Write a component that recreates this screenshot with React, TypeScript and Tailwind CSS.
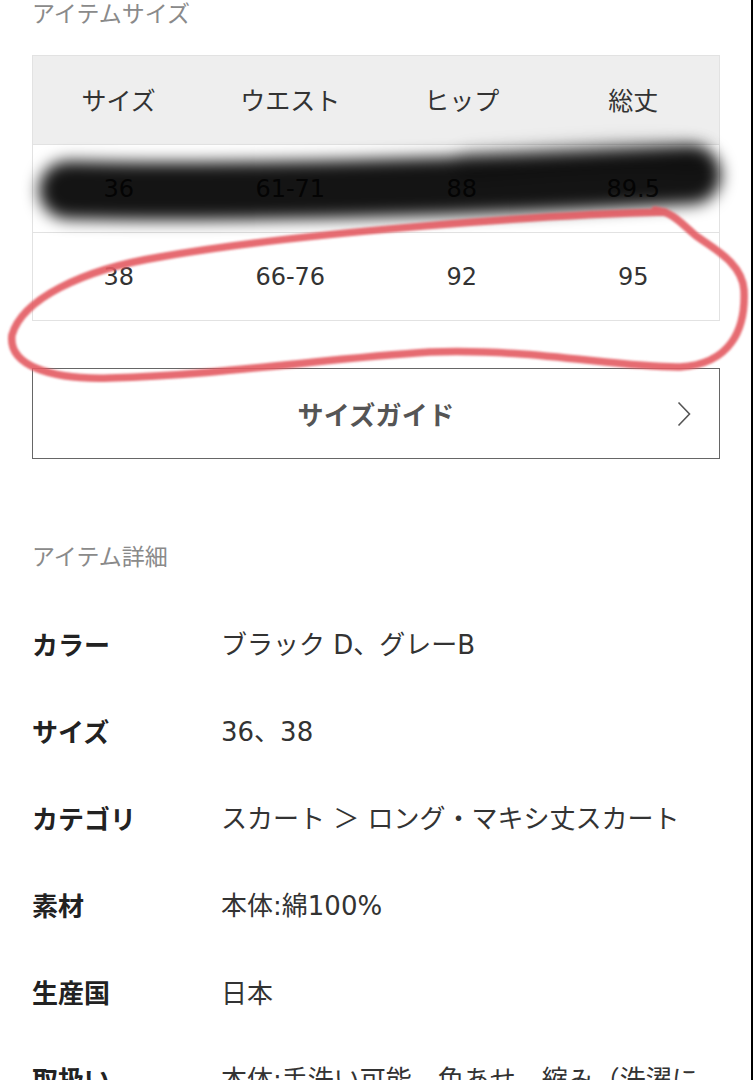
import React from "react";

const cjk = { fontFamily: '"Noto Sans CJK JP", "Noto Sans", sans-serif' };
const latin = { fontFamily: '"DejaVu Sans", "Noto Sans CJK JP", sans-serif' };

const header = ["サイズ", "ウエスト", "ヒップ", "総丈"];
const rows = [
  ["36", "61-71", "88", "89.5"],
  ["38", "66-76", "92", "95"],
];

const details: [string, string][] = [
  ["カラー", "ブラック D、グレーB"],
  ["サイズ", "36、38"],
  ["カテゴリ", "スカート ＞ ロング・マキシ丈スカート"],
  ["素材", "本体:綿100%"],
  ["生産国", "日本"],
  ["取扱い", "本体:手洗い可能、色あせ、縮み（洗濯に"],
];

function Mixed({ text }: { text: string }) {
  const parts = text.split(/([\x20-\x7E]+)/);
  return (
    <>
      {parts.map((p, i) =>
        /^[\x20-\x7E]+$/.test(p) ? (
          <span key={i} style={latin} className="whitespace-pre">
            {p}
          </span>
        ) : (
          <React.Fragment key={i}>{p}</React.Fragment>
        )
      )}
    </>
  );
}

export default function App() {
  return (
    <div
      className="relative w-[753px] h-[1080px] overflow-hidden bg-white border-r-2 border-black"
      style={cjk}
    >
      <div className="pl-[32px] pr-[31px]">
        <div className="h-[26px] leading-[26px] text-[23px] text-[#8a8a8a] -mt-[1px]">
          アイテムサイズ
        </div>

        <div className="mt-[30px] border border-[#e2e2e2]">
          <div className="grid grid-cols-4 h-[88px] bg-[#eeeeee] items-center text-center text-[25px] text-[#333]">
            {header.map((h) => (
              <div key={h}>{h}</div>
            ))}
          </div>
          {rows.map((r, i) => (
            <div
              key={i}
              className="grid grid-cols-4 h-[88px] items-center text-center text-[24px] text-[#333] border-t border-[#e2e2e2]"
              style={latin}
            >
              {r.map((c, j) => (
                <div key={j}>{c}</div>
              ))}
            </div>
          ))}
        </div>

        <div className="mt-[47px] h-[91px] border-[1.5px] border-[#666] flex items-center justify-center relative">
          <span className="text-[26px] font-bold text-[#555] tracking-[0.01em]">サイズガイド</span>
          <svg
            className="absolute right-[28px] top-1/2 -translate-y-1/2"
            width="14"
            height="26"
            viewBox="0 0 14 26"
          >
            <polyline points="1.5,1.5 12.5,13 1.5,24.5" fill="none" stroke="#555" strokeWidth="1.6" />
          </svg>
        </div>

        <div className="mt-[83px] h-[26px] leading-[26px] text-[23px] text-[#8a8a8a]">
          アイテム詳細
        </div>

        <div className="mt-[32px]">
          {details.map(([k, v]) => (
            <div key={k} className="flex items-center h-[87px] text-[26px] leading-[38px] whitespace-nowrap">
              <div className="w-[189px] shrink-0 font-bold text-[#222]">{k}</div>
              <div className="text-[#333]">
                <Mixed text={v} />
              </div>
            </div>
          ))}
        </div>
      </div>

      <svg
        className="absolute left-0 top-0 pointer-events-none"
        width="753"
        height="1080"
        viewBox="0 0 753 1080"
      >
        <defs>
          <filter id="blurBand" filterUnits="userSpaceOnUse" x="0" y="0" width="753" height="1080">
            <feGaussianBlur stdDeviation="8" />
          </filter>
          <filter id="softRed" filterUnits="userSpaceOnUse" x="0" y="0" width="753" height="1080">
            <feGaussianBlur stdDeviation="0.8" />
          </filter>
        </defs>
        <path
          d="M 470 165 C 560 158, 640 152, 695 158"
          fill="none"
          stroke="#000"
          strokeOpacity="0.22"
          strokeWidth="30"
          strokeLinecap="round"
          filter="url(#blurBand)"
        />
        <path
          d="M 68 190 C 220 194, 460 188, 692 175"
          fill="none"
          stroke="#000"
          strokeOpacity="0.92"
          strokeWidth="58"
          strokeLinecap="round"
          filter="url(#blurBand)"
        />
        <path
          d="M 665 212 C 560 214, 300 232, 160 257 C 80 270, 22 300, 12 335 C 8 365, 50 380, 110 378 C 220 375, 330 358, 430 352 C 530 348, 620 368, 680 367 C 730 364, 746 330, 744 290 C 742 262, 712 248, 695 235 C 680 222, 672 212, 655 210"
          fill="none"
          stroke="#e35b62"
          strokeOpacity="0.9"
          strokeWidth="7.5"
          strokeLinecap="round"
          strokeLinejoin="round"
          filter="url(#softRed)"
        />
      </svg>
    </div>
  );
}
